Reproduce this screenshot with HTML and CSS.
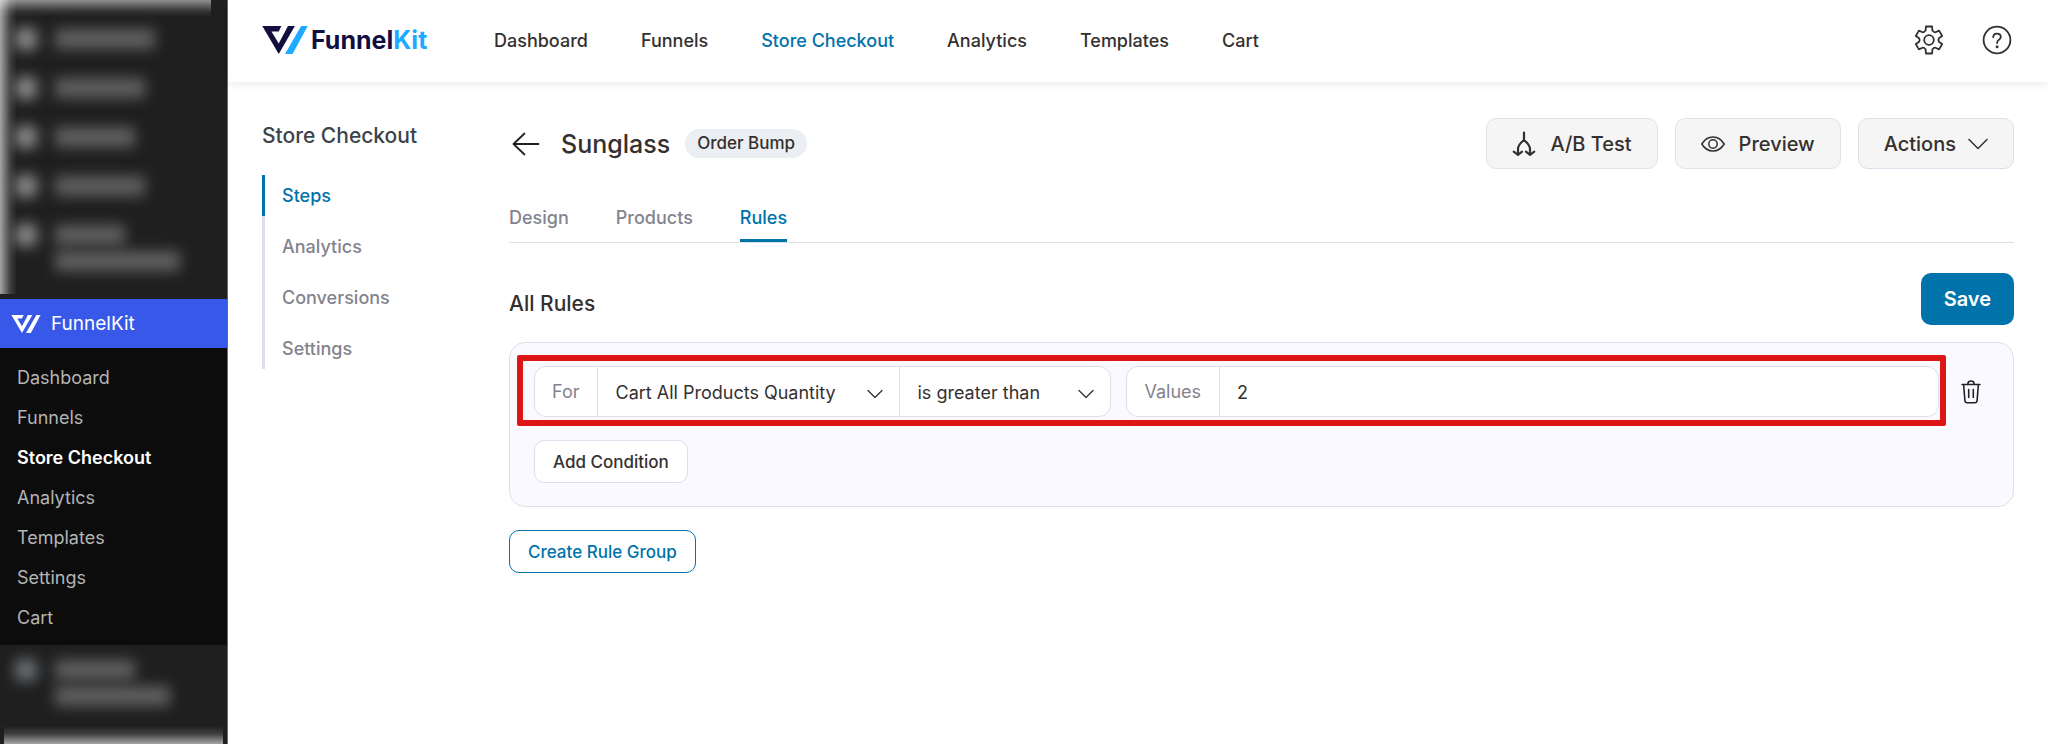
FILE: index.html
```html
<!DOCTYPE html>
<html lang="en">
<head>
    <meta charset="UTF-8">
    <meta name="viewport" content="width=device-width, initial-scale=1.0">
    <title>Store Checkout - FunnelKit</title>
    <link rel="stylesheet" href="styles.css">
</head>
<body>

<!-- Admin sidebar -->
<aside class="sidebar">
    <div class="blurred blurred-top" aria-hidden="true">
        <div class="ghost"><i></i><b class="w100"></b></div>
        <div class="ghost"><i></i><b class="w90"></b></div>
        <div class="ghost"><i></i><b class="w80"></b></div>
        <div class="ghost"><i></i><b class="w90"></b></div>
        <div class="ghost"><i></i><b class="w70"></b></div>
        <div class="ghost second"><b class="w125"></b></div>
    </div>
    <a class="plugin" href="#">
        <svg width="30" height="18" viewBox="0 0 138 85" fill="#fff"><path d="M0 0H58L50 17H28L50 53L78 0H99L50 85Z"/><path d="M118 0H138L92 85H69Z"/></svg>
        FunnelKit
    </a>
    <nav class="submenu">
        <a href="#">Dashboard</a>
        <a href="#">Funnels</a>
        <a href="#" class="current">Store Checkout</a>
        <a href="#">Analytics</a>
        <a href="#">Templates</a>
        <a href="#">Settings</a>
        <a href="#">Cart</a>
    </nav>
    <div class="blurred blurred-bottom" aria-hidden="true">
        <div class="ghost"><i></i><b class="w80"></b></div>
        <div class="ghost second"><b class="w115"></b></div>
    </div>
</aside>

<div class="page">
    <header class="topbar">
        <a class="logo" href="#">
            <svg width="46" height="28" viewBox="0 0 138 85"><path fill="#120f40" d="M0 0H58L50 17H28L50 53L78 0H99L50 85Z"/><path fill="#1daaff" d="M118 0H138L92 85H69Z"/></svg>
            <span class="wordmark">Funnel<span>Kit</span></span>
        </a>
        <nav class="main-nav">
            <a href="#">Dashboard</a>
            <a href="#">Funnels</a>
            <a href="#" class="current">Store Checkout</a>
            <a href="#">Analytics</a>
            <a href="#">Templates</a>
            <a href="#">Cart</a>
        </nav>
        <div class="tools">
            <button class="icon-button" aria-label="Settings">
                <svg width="30" height="30" viewBox="0 0 30 30" fill="none" stroke="#353030" stroke-width="1.8" stroke-linejoin="round"><circle cx="15" cy="15" r="4.8"/><path d="M11.9 1.5H18.1L18.4 5.6Q19.800 7.600 21.400 7.300L25.100 5.600L28.200 11L24.800 13.300Q24 15 24.800 16.700L28.200 19L25.100 24.400L21.400 22.700Q19.800 22.400 18.400 24.400L18.100 28.500H11.900L11.600 24.400Q10.200 22.400 8.600 22.700L4.900 24.400L1.800 19L5.200 16.700Q6 15 5.200 13.300L1.800 11L4.900 5.600L8.600 7.300Q10.200 7.600 11.600 5.600Z"/></svg>
            </button>
            <button class="icon-button" aria-label="Help">
                <svg width="30" height="30" viewBox="0 0 30 30" fill="none" stroke="#353030" stroke-width="1.8" stroke-linecap="round"><circle cx="15" cy="15" r="13.4"/><path d="M11.300 12.200c0-2.200 1.500-3.500 3.700-3.500s3.800 1.400 3.800 3.400c0 2.700-3.700 2.700-3.700 5.400v.5"/><circle cx="15.100" cy="21.700" r=".6" fill="#353030"/></svg>
            </button>
        </div>
    </header>

    <div class="content">
        <section class="side">
            <h2>Store Checkout</h2>
            <nav class="side-nav">
                <a href="#" class="current">Steps</a>
                <a href="#">Analytics</a>
                <a href="#">Conversions</a>
                <a href="#">Settings</a>
            </nav>
        </section>

        <main class="main">
            <div class="title-row">
                <a class="back" href="#" aria-label="Back">
                    <svg width="28" height="24" viewBox="0 0 28 24" fill="none" stroke="#222" stroke-width="1.8" stroke-linecap="round" stroke-linejoin="round"><path d="M26.500 12H1.500M12.500 1.500L1.500 12l11 10.500"/></svg>
                </a>
                <h1>Sunglass</h1>
                <span class="badge">Order Bump</span>
                <div class="actions">
                    <button class="button">
                        <svg width="24" height="26" viewBox="0 0 24 26" fill="none" stroke="#353030" stroke-width="2.2" stroke-linecap="round" stroke-linejoin="round"><path d="M12 1.500V9M12 9c-3.500 2.800-6 5-6 9v6M12 9c3.500 2.800 6 5 6 9v6M1.800 20.700L6 24l4-3.300M14 20.700l4 3.300 4.200-3.300"/></svg>
                        A/B Test
                    </button>
                    <button class="button">
                        <svg width="24" height="24" viewBox="0 0 24 24" fill="none" stroke="#353030" stroke-width="1.5" stroke-linejoin="round"><path d="M.8 12C3.500 7.500 7.300 5 12 5s8.500 2.500 11.200 7c-2.700 4.500-6.500 7-11.200 7S3.500 16.500.8 12z"/><circle cx="12" cy="12" r="4.200"/></svg>
                        Preview
                    </button>
                    <button class="button menu">
                        Actions
                        <svg width="20" height="12" viewBox="0 0 20 12" fill="none" stroke="#353030" stroke-width="1.5" stroke-linecap="round" stroke-linejoin="round"><path d="M1 1.500l9 9 9-9"/></svg>
                    </button>
                </div>
            </div>

            <nav class="tabs">
                <a href="#">Design</a>
                <a href="#">Products</a>
                <a href="#" class="current">Rules</a>
            </nav>

            <div class="rules-head">
                <h3>All Rules</h3>
                <button class="save">Save</button>
            </div>

            <div class="rule-group">
                <div class="rule-row">
                    <div class="condition">
                        <div class="field">
                            <label for="rule">For</label>
                            <div class="select rule">
                                <select id="rule"><option>Cart All Products Quantity</option></select>
                                <svg width="16" height="10" viewBox="0 0 16 10" fill="none" stroke="#353030" stroke-width="1.3" stroke-linecap="round" stroke-linejoin="round"><path d="M1 1.500l7 7 7-7"/></svg>
                            </div>
                            <div class="select operator">
                                <select aria-label="Operator"><option>is greater than</option></select>
                                <svg width="16" height="10" viewBox="0 0 16 10" fill="none" stroke="#353030" stroke-width="1.3" stroke-linecap="round" stroke-linejoin="round"><path d="M1 1.500l7 7 7-7"/></svg>
                            </div>
                        </div>
                        <div class="field grow">
                            <label for="value">Values</label>
                            <input id="value" type="text" value="2">
                        </div>
                    </div>
                    <button class="trash" aria-label="Delete condition">
                        <svg width="20" height="24" viewBox="0 0 20 24" fill="none" stroke="#222" stroke-width="1.6" stroke-linecap="round" stroke-linejoin="round"><path d="M1 4.500h18M6.800 4.500C6.800 2 8 1 10 1s3.200 1 3.200 3.500M2.600 4.500l1.300 16c.1 1.500 1 2.300 2.400 2.300h7.400c1.400 0 2.300-.8 2.400-2.300l1.300-16M7.700 9.500v8M12.300 9.500v8"/></svg>
                    </button>
                </div>
                <button class="small-button">Add Condition</button>
            </div>
            <button class="small-button create">Create Rule Group</button>
        </main>
    </div>
</div>

</body>
</html>
```
FILE: styles.css
```css
* {
    box-sizing: border-box;
}
body {
    margin: 0;
    display: flex;
    min-height: 100vh;
    font-family: Inter, "Liberation Sans", sans-serif;
    font-size: 18px;
    color: #353030;
    background-color: #fff;
}
a {
    color: inherit;
    text-decoration: none;
}
button, select, input {
    font: inherit;
    color: inherit;
}
button {
    cursor: pointer;
}
h1, h2, h3 {
    margin: 0;
    font-weight: 500;
}

/* Admin sidebar */
.sidebar {
    display: flex;
    flex-direction: column;
    flex: none;
    width: 228px;
    background-color: #1f1f1f;
    border-right: 1px solid #6b6b6b;
}
.blurred {
    overflow: hidden;
}
.blurred-top {
    width: 211px;
    height: 294px;
    margin-bottom: 5px;
    padding-top: 14px;
    background: linear-gradient(to bottom, rgba(255, 255, 255, 0.5), rgba(255, 255, 255, 0.1) 11px, transparent 17px),
        linear-gradient(to right, rgba(255, 255, 255, 0.6), rgba(255, 255, 255, 0.15) 10px, transparent 17px);
}
.blurred-bottom {
    flex: 1;
    margin: 0 4px;
    background: linear-gradient(to top, rgba(255, 255, 255, 0.6), rgba(255, 255, 255, 0.15) 10px, transparent 18px);
}
.ghost {
    display: flex;
    align-items: center;
    gap: 18px;
    height: 49px;
    padding-left: 15px;
    filter: blur(7px);
}
.ghost i {
    width: 22px;
    height: 22px;
    border-radius: 5px;
    background-color: #8a8a8a;
}
.ghost b {
    height: 20px;
    background-color: #606060;
}
.ghost.second {
    height: 28px;
    margin-top: -12px;
    padding-left: 55px;
}
.blurred-bottom .ghost {
    padding-left: 11px;
}
.blurred-bottom .ghost i {
    background-color: #6a7075;
}
.blurred-bottom .ghost.second {
    padding-left: 51px;
}
.w70 { width: 70px; }
.w80 { width: 80px; }
.w90 { width: 90px; }
.w100 { width: 100px; }
.w115 { width: 115px; }
.w125 { width: 125px; }

.plugin {
    display: flex;
    align-items: center;
    gap: 10px;
    height: 49px;
    padding-left: 11px;
    font-size: 19px;
    color: #fff;
    background-color: #3858e9;
}
.submenu {
    display: flex;
    flex-direction: column;
    padding: 10px 17px 7px;
    line-height: 40px;
    color: #b4b4b4;
    background-color: #0c0c0c;
}
.submenu .current {
    color: #fff;
    font-weight: 600;
}

/* Top bar */
.page {
    flex: 1;
    min-width: 0;
}
.topbar {
    display: flex;
    align-items: center;
    height: 82px;
    padding: 0 36px 2px 34px;
    box-shadow: 0 1px 10px rgba(0, 0, 0, 0.1);
}
.logo {
    display: flex;
    align-items: center;
    gap: 3px;
    width: 232px;
}
.wordmark {
    font-size: 25px;
    font-weight: 700;
    color: #120f40;
}
.wordmark span {
    color: #1daaff;
}
.main-nav {
    display: flex;
    gap: 53px;
    font-weight: 500;
}
.main-nav .current {
    color: #0073aa;
}
.tools {
    display: flex;
    gap: 38px;
    margin-left: auto;
}
.icon-button, .trash {
    display: flex;
    align-items: center;
    justify-content: center;
    padding: 0;
    border: none;
    background: none;
}

/* Content */
.content {
    display: flex;
    padding: 36px 34px;
}
.side {
    width: 247px;
    flex: none;
}
.side h2 {
    font-size: 21px;
    line-height: 35px;
    color: #3c434a;
}
.side-nav {
    display: flex;
    flex-direction: column;
    gap: 10px;
    margin-top: 22px;
    width: 180px;
    line-height: 41px;
    font-weight: 500;
    color: #82838e;
    box-shadow: inset 3px 0 #dedfea;
}
.side-nav a {
    padding-left: 20px;
}
.side-nav .current {
    color: #0073aa;
    box-shadow: inset 3px 0 #0073aa;
}
.main {
    flex: 1;
    min-width: 0;
}
.title-row {
    display: flex;
    align-items: center;
}
.back {
    display: flex;
    margin: 0 21px 0 3px;
}
.title-row h1 {
    font-size: 25px;
}
.badge {
    margin-left: 15px;
    padding: 0 12px;
    border-radius: 15px;
    font-size: 17px;
    line-height: 29px;
    font-weight: 500;
    background-color: #ebeef2;
}
.actions {
    display: flex;
    gap: 17px;
    margin-left: auto;
}
.button {
    display: flex;
    align-items: center;
    gap: 14px;
    height: 51px;
    padding: 0 25px;
    border: 1px solid #e3e3e6;
    border-radius: 10px;
    font-size: 20px;
    font-weight: 500;
    background-color: #f5f5f5;
}
.button.menu {
    gap: 12px;
    border-color: #dedfea;
}

.tabs {
    display: flex;
    gap: 47px;
    margin-top: 27px;
    border-bottom: 1px solid #dedfea;
    font-weight: 500;
    line-height: 43px;
    color: #82838e;
}
.tabs a {
    border-bottom: 3px solid transparent;
}
.tabs .current {
    color: #0073aa;
    border-color: #0073aa;
}

.rules-head {
    display: flex;
    align-items: center;
    justify-content: space-between;
    margin-top: 30px;
}
.rules-head h3 {
    font-size: 21px;
    padding-top: 9px;
}
.save {
    height: 52px;
    padding: 0 23px;
    border: none;
    border-radius: 10px;
    font-size: 20px;
    font-weight: 600;
    color: #fff;
    background-color: #0073aa;
}

.rule-group {
    margin: 17px 0 23px;
    padding: 23px 24px;
    border: 1px solid #dedfea;
    border-radius: 16px;
    background-color: #faf9ff;
}
.rule-row {
    display: flex;
    gap: 14px;
    margin-bottom: 23px;
}
.condition {
    position: relative;
    display: flex;
    flex: 1;
    gap: 15px;
}
/* Red highlight around the condition */
.condition::before {
    content: "";
    position: absolute;
    inset: -11px -7px -9px -17px;
    border: 6px solid #dd1515;
    border-radius: 2px;
    pointer-events: none;
}
.field {
    display: flex;
    height: 51px;
    border: 1px solid #dedfea;
    border-radius: 12px;
    overflow: hidden;
    background-color: #fff;
}
.field.grow {
    flex: 1;
}
.field label {
    padding: 0 18px 0 17px;
    line-height: 50px;
    color: #82838e;
    border-right: 1px solid #dedfea;
}
.field select, .field input {
    width: 100%;
    height: 100%;
    padding: 1px 17px 0;
    border: none;
    outline: none;
    appearance: none;
    background: none;
}
.field.grow input {
    flex: 1;
    width: auto;
}
.select {
    position: relative;
}
.select svg {
    position: absolute;
    right: 16px;
    top: 22px;
    pointer-events: none;
}
.select.rule {
    width: 302px;
    border-right: 1px solid #dedfea;
}
.select.operator {
    width: 210px;
}
.trash {
    width: 36px;
}
.small-button {
    display: block;
    height: 43px;
    padding: 0 18px;
    border: 1px solid #dedfea;
    border-radius: 10px;
    font-size: 17px;
    font-weight: 500;
    background-color: #fff;
}
.small-button.create {
    color: #0073aa;
    border-color: #0073aa;
}
```
